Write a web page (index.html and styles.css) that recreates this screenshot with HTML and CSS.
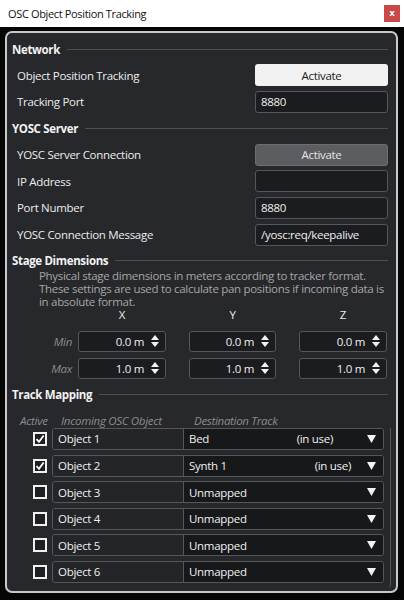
FILE: index.html
```html
<!DOCTYPE html>
<html>
<head>
<meta charset="utf-8">
<link rel="stylesheet" href="styles.css">
</head>
<body>
<div class="titlebar">
  <span class="title">OSC Object Position Tracking</span>
  <span class="close">x</span>
</div>
<div class="panel">
  <div class="section-head"><span class="head-text">Network</span><i class="rule"></i></div>
  <div class="row"><span class="label">Object Position Tracking</span><div class="ctrl btn btn-light">Activate</div></div>
  <div class="row"><span class="label">Tracking Port</span><div class="ctrl field">8880</div></div>

  <div class="section-head"><span class="head-text">YOSC Server</span><i class="rule"></i></div>
  <div class="row"><span class="label">YOSC Server Connection</span><div class="ctrl btn btn-gray">Activate</div></div>
  <div class="row"><span class="label">IP Address</span><div class="ctrl field"></div></div>
  <div class="row"><span class="label">Port Number</span><div class="ctrl field">8880</div></div>
  <div class="row"><span class="label">YOSC Connection Message</span><div class="ctrl field">/yosc:req/keepalive</div></div>

  <div class="section-head stage-head"><span class="head-text">Stage Dimensions</span><i class="rule"></i></div>
  <p class="desc">Physical stage dimensions in meters according to tracker format.<br>These settings are used to calculate pan positions if incoming data is<br>in absolute format.</p>
  <div class="axis-row">
    <span class="axis w88">X</span><span class="axis w87">Y</span><span class="axis w88">Z</span>
  </div>
  <div class="dim-row">
    <span class="dim-label">Min</span>
    <div class="spin w88"><span class="val">0.0 m</span><svg class="arrows" width="8" height="14" viewBox="0 0 8 14"><path d="M0 6 L4 1 L8 6 Z M0 8 L8 8 L4 13 Z" fill="#f2f2f2"/></svg></div>
    <div class="spin w87"><span class="val">0.0 m</span><svg class="arrows" width="8" height="14" viewBox="0 0 8 14"><path d="M0 6 L4 1 L8 6 Z M0 8 L8 8 L4 13 Z" fill="#f2f2f2"/></svg></div>
    <div class="spin w88"><span class="val">0.0 m</span><svg class="arrows" width="8" height="14" viewBox="0 0 8 14"><path d="M0 6 L4 1 L8 6 Z M0 8 L8 8 L4 13 Z" fill="#f2f2f2"/></svg></div>
  </div>
  <div class="dim-row">
    <span class="dim-label">Max</span>
    <div class="spin w88"><span class="val">1.0 m</span><svg class="arrows" width="8" height="14" viewBox="0 0 8 14"><path d="M0 6 L4 1 L8 6 Z M0 8 L8 8 L4 13 Z" fill="#f2f2f2"/></svg></div>
    <div class="spin w87"><span class="val">1.0 m</span><svg class="arrows" width="8" height="14" viewBox="0 0 8 14"><path d="M0 6 L4 1 L8 6 Z M0 8 L8 8 L4 13 Z" fill="#f2f2f2"/></svg></div>
    <div class="spin w88"><span class="val">1.0 m</span><svg class="arrows" width="8" height="14" viewBox="0 0 8 14"><path d="M0 6 L4 1 L8 6 Z M0 8 L8 8 L4 13 Z" fill="#f2f2f2"/></svg></div>
  </div>

  <div class="section-head"><span class="head-text">Track Mapping</span><i class="rule"></i></div>
  <div class="map-head">
    <span class="mh-active">Active</span><span class="mh-obj">Incoming OSC Object</span><span class="mh-dest">Destination Track</span>
  </div>
  <div class="map-list">
    <div class="map-row">
      <span class="check checked"><svg width="12" height="12" viewBox="0 0 12 12"><path d="M1.8 6.2 L4.8 9.4 L10.4 1.8" fill="none" stroke="#fff" stroke-width="2.2"/></svg></span>
      <div class="map-field"><span class="obj">Object 1</span><span class="dest"><span class="dest-name">Bed</span><span class="inuse inuse-wide">(in use)</span><svg class="tri" width="9" height="8" viewBox="0 0 9 8"><path d="M0 0 L9 0 L4.5 8 Z" fill="#f2f2f2"/></svg></span></div>
    </div>
    <div class="map-row">
      <span class="check checked"><svg width="12" height="12" viewBox="0 0 12 12"><path d="M1.8 6.2 L4.8 9.4 L10.4 1.8" fill="none" stroke="#fff" stroke-width="2.2"/></svg></span>
      <div class="map-field"><span class="obj">Object 2</span><span class="dest"><span class="dest-name">Synth 1</span><span class="inuse inuse-narrow">(in use)</span><svg class="tri" width="9" height="8" viewBox="0 0 9 8"><path d="M0 0 L9 0 L4.5 8 Z" fill="#f2f2f2"/></svg></span></div>
    </div>
    <div class="map-row">
      <span class="check"></span>
      <div class="map-field"><span class="obj">Object 3</span><span class="dest"><span class="dest-name">Unmapped</span><svg class="tri" width="9" height="8" viewBox="0 0 9 8"><path d="M0 0 L9 0 L4.5 8 Z" fill="#f2f2f2"/></svg></span></div>
    </div>
    <div class="map-row">
      <span class="check"></span>
      <div class="map-field"><span class="obj">Object 4</span><span class="dest"><span class="dest-name">Unmapped</span><svg class="tri" width="9" height="8" viewBox="0 0 9 8"><path d="M0 0 L9 0 L4.5 8 Z" fill="#f2f2f2"/></svg></span></div>
    </div>
    <div class="map-row">
      <span class="check"></span>
      <div class="map-field"><span class="obj">Object 5</span><span class="dest"><span class="dest-name">Unmapped</span><svg class="tri" width="9" height="8" viewBox="0 0 9 8"><path d="M0 0 L9 0 L4.5 8 Z" fill="#f2f2f2"/></svg></span></div>
    </div>
    <div class="map-row">
      <span class="check"></span>
      <div class="map-field"><span class="obj">Object 6</span><span class="dest"><span class="dest-name">Unmapped</span><svg class="tri" width="9" height="8" viewBox="0 0 9 8"><path d="M0 0 L9 0 L4.5 8 Z" fill="#f2f2f2"/></svg></span></div>
    </div>
  </div>
</div>
</body>
</html>
```

FILE: styles.css
```css
* { box-sizing: border-box; }
html, body { margin: 0; padding: 0; }
body {
  width: 404px;
  height: 600px;
  overflow: hidden;
  background: #060606;
  font-family: "Open Sans", "Noto Sans", sans-serif;
  font-size: 11.5px;
  letter-spacing: -0.3px;
  color: #e8e8e8;
}
.titlebar {
  height: 27px;
  background: #ffffff;
  display: flex;
  align-items: center;
  justify-content: space-between;
  padding: 0 4px 0 8px;
  color: #111;
}
.title { font-size: 11px; letter-spacing: -0.35px; }
.close {
  width: 16px;
  height: 17px;
  background: #c94848;
  color: #fff;
  font-weight: bold;
  font-size: 9px;
  line-height: 16px;
  text-align: center;
  letter-spacing: 0;
}
.panel {
  margin: 4px 6px 0 5px;
  height: 562px;
  border: 2px solid #c8c8c8;
  border-radius: 7px;
  background: #26282b;
  padding: 3px 8px 0 5px;
}
.section-head {
  height: 26px;
  display: flex;
  align-items: center;
}
.head-text { font-weight: bold; font-size: 11.5px; color: #f2f2f2; letter-spacing: -0.35px; }
.rule { flex: 1; height: 1px; background: #4c4e52; margin-left: 7px; }
.row {
  height: 26.67px;
  display: flex;
  align-items: center;
  justify-content: space-between;
  padding-left: 5px;
}
.label { color: #ececec; }
.ctrl {
  width: 133px;
  height: 22px;
  border-radius: 3px;
}
.btn {
  display: flex;
  align-items: center;
  justify-content: center;
}
.btn-light { background: #f2f2f2; color: #1a1a1a; }
.btn-gray { background: #5b5d60; color: #e6e6e6; border: 1px solid #6c6e72; }
.field {
  background: #1b1c1f;
  border: 1px solid #55575b;
  padding-left: 5px;
  display: flex;
  align-items: center;
  color: #f0f0f0;
}
.stage-head { height: 16px; margin-top: 5px; }
.desc {
  margin: 0;
  padding-left: 27px;
  color: #a6a6a6;
  line-height: 13px;
  white-space: nowrap;
}
.axis-row {
  display: flex;
  height: 13px;
  line-height: 13px;
  padding-left: 66px;
  gap: 23px;
}
.axis { text-align: center; color: #ececec; }
.w88 { width: 88px; flex: none; }
.w87 { width: 87px; flex: none; }
.dim-row {
  height: 27px;
  display: flex;
  align-items: center;
  gap: 23px;
}
.axis-row + .dim-row { margin-top: 7px; }
.dim-label {
  width: 60px;
  margin-right: -17px;
  text-align: right;
  color: #8c8c8c;
  font-style: italic;
}
.spin {
  height: 21px;
  background: #1b1c1f;
  border: 1px solid #55575b;
  border-radius: 3px;
  display: flex;
  align-items: center;
  justify-content: flex-end;
  padding-right: 6px;
}
.val { margin-right: 7px; color: #f0f0f0; }
.arrows { display: block; }
.map-head {
  height: 20px;
  display: flex;
  align-items: flex-end;
  line-height: 14px;
  color: #8c8c8c;
  font-style: italic;
}
.mh-active { margin-left: 8px; width: 41px; }
.mh-obj { width: 133px; }
.map-list {
  width: 379px;
  height: 160px;
  border-right: 1px solid #55575b;
  border-bottom-right-radius: 4px;
}
.map-row {
  height: 26.6px;
  display: flex;
  align-items: flex-start;
  padding-left: 21px;
}
.check {
  width: 14px;
  height: 14px;
  margin-top: 4px;
  border: 2px solid #f0f0f0;
  background: #1e1f22;
  margin-right: 5px;
  display: flex;
  align-items: center;
  justify-content: center;
}
.check svg { display: block; }
.map-field {
  width: 332px;
  height: 22px;
  display: flex;
  border: 1px solid #55575b;
  border-radius: 3px;
  overflow: hidden;
}
.obj {
  width: 131px;
  background: #232528;
  border-right: 1px solid #55575b;
  padding-left: 5px;
  display: flex;
  align-items: center;
  color: #f0f0f0;
}
.dest {
  flex: 1;
  background: #17181a;
  display: flex;
  align-items: center;
  padding: 0 7px 0 5px;
  color: #f0f0f0;
}
.dest-name { flex: 1; }
.inuse-wide { margin-right: 34px; }
.inuse-narrow { margin-right: 16px; }
.tri { display: block; }
```
